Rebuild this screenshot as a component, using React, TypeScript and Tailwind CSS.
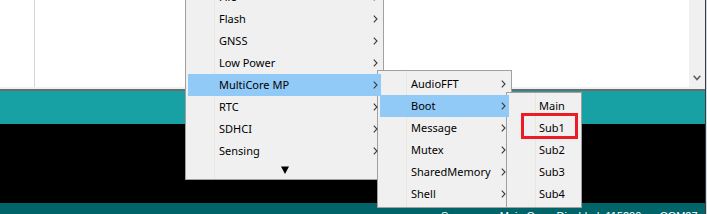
import React from "react";

const Chevron = () => (
  <svg width="5" height="8" viewBox="0 0 5 8" className="shrink-0">
    <polyline points="0.8,0.6 4,4 0.8,7.4" fill="none" stroke="#3a3a3a" strokeWidth="1.1" />
  </svg>
);

type Item = { label: string; hl?: boolean };

const Row = ({ item, chevron, pl }: { item: Item; chevron: boolean; pl: string }) => (
  <div
    className={`relative z-[1] flex h-[22px] items-center justify-between pr-[3px] ${pl} ${
      item.hl ? "bg-[#91c9f7]" : ""
    }`}
  >
    <span className="leading-[22px] whitespace-nowrap">{item.label}</span>
    {chevron && <Chevron />}
  </div>
);

export default function App() {
  const main: Item[] = [
    { label: "File" },
    { label: "Flash" },
    { label: "GNSS" },
    { label: "Low Power" },
    { label: "MultiCore MP", hl: true },
    { label: "RTC" },
    { label: "SDHCI" },
    { label: "Sensing" },
  ];
  const sub1: Item[] = [
    { label: "AudioFFT" },
    { label: "Boot", hl: true },
    { label: "Message" },
    { label: "Mutex" },
    { label: "SharedMemory" },
    { label: "Shell" },
  ];
  const sub2: Item[] = [
    { label: "Main" },
    { label: "Sub1" },
    { label: "Sub2" },
    { label: "Sub3" },
    { label: "Sub4" },
  ];

  return (
    <div className="relative h-[214px] w-[707px] overflow-hidden bg-black font-['Noto_Sans',sans-serif] text-[11px] text-black">
      <div className="flex h-full">
        <div className="flex flex-1 flex-col">
          <div className="flex h-[87px] shrink-0 bg-white">
            <div className="w-[35px] border-r border-[#d6d6d6]" />
            <div className="flex-1" />
            <div className="flex w-[16px] items-end justify-center bg-[#f0f0f0] pb-[6px]">
              <svg width="8" height="6" viewBox="0 0 8 6">
                <polyline points="0.7,0.8 4,4.6 7.3,0.8" fill="none" stroke="#606060" strokeWidth="1.6" />
              </svg>
            </div>
          </div>
          <div className="h-[2px] shrink-0 bg-[#efefef]" />
          <div className="h-[2px] shrink-0 bg-[#6b6b6b]" />
          <div className="h-[33px] shrink-0 bg-[#17a1a5]" />
          <div className="h-[79px] shrink-0 bg-black" />
          <div className="h-[11px] shrink-0 overflow-hidden bg-[#006468] pl-[441px] pt-[7px] font-['Liberation_Sans',Arial,sans-serif] text-[11px] leading-[13px] whitespace-nowrap text-white">
            Spresense, Main Core, Disabled, 115200 on COM27
          </div>
        </div>
        <div className="w-px bg-[#3a3a3a]" />
        <div className="w-px bg-[#d0dbe6]" />
      </div>

      {/* Main menu */}
      <div className="absolute left-[185px] top-[-17px] w-[199px] border border-[#a0a0a0] bg-[#f0f0f0] p-[2px]">
        <div className="absolute bottom-0 left-[28px] top-0 w-px bg-[#e6e6e6]" />
        {main.map((it) => (
          <Row key={it.label} item={it} chevron pl="pl-[31px]" />
        ))}
        <div className="relative z-[1] flex h-[15px] items-center justify-center">
          <svg width="8" height="8" viewBox="0 0 8 8">
            <polygon points="0,0.5 8,0.5 4,8" fill="#000" />
          </svg>
        </div>
      </div>

      {/* Submenu 1 */}
      <div className="absolute left-[377px] top-[70px] w-[135px] border border-[#a0a0a0] bg-[#f0f0f0] p-[2px]">
        <div className="absolute bottom-0 left-[28px] top-0 w-px bg-[#e6e6e6]" />
        {sub1.map((it) => (
          <Row key={it.label} item={it} chevron pl="pl-[31px]" />
        ))}
      </div>

      {/* Submenu 2 */}
      <div className="absolute left-[506px] top-[92px] w-[76px] border border-[#a0a0a0] bg-[#f0f0f0] p-[2px]">
        <div className="absolute bottom-0 left-[28px] top-0 w-px bg-[#e6e6e6]" />
        {sub2.map((it) => (
          <Row key={it.label} item={it} chevron={false} pl="pl-[30px]" />
        ))}
      </div>

      {/* Annotation box */}
      <div className="absolute left-[521px] top-[113px] h-[26px] w-[57px] border-[3px] border-[#ed1c24]" />
    </div>
  );
}
